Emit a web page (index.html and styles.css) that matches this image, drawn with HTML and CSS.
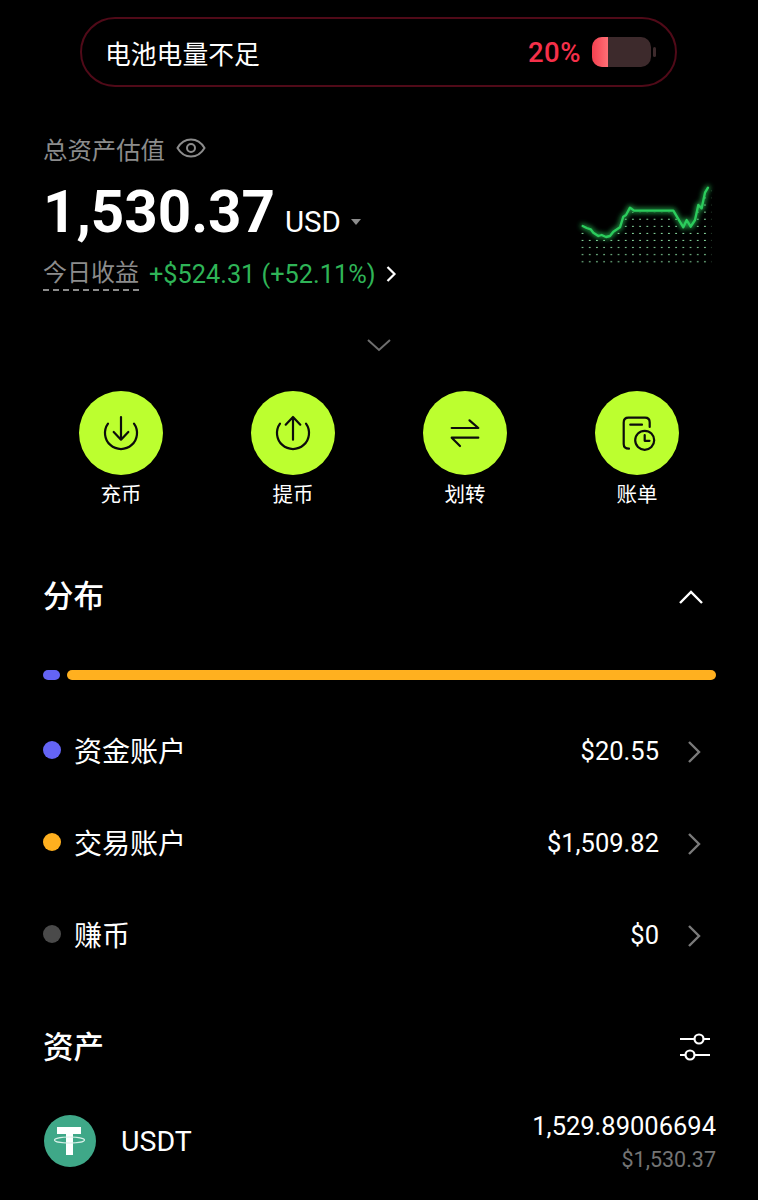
FILE: index.html
```html
<!DOCTYPE html>
<html lang="zh-CN">
<head>
    <meta charset="UTF-8">
    <meta name="viewport" content="width=device-width, initial-scale=1.0">
    <title>资产</title>
    <link rel="stylesheet" href="styles.css">
</head>
<body>
    <div class="page">

        <!-- Battery warning -->
        <div class="battery-banner">
            <span class="battery-text">电池电量不足</span>
            <span class="battery-percent">20%</span>
            <span class="battery-icon"><span class="battery-level"></span></span>
            <span class="battery-cap"></span>
        </div>

        <!-- Total assets -->
        <section class="summary">
            <div class="summary-info">
                <div class="total-label">
                    <span>总资产估值</span>
                    <svg class="eye-icon" viewBox="0 0 30 24" fill="none" stroke="#8c8c8c" stroke-width="2">
                        <path d="M1.500 12C5 6 9.500 3.500 15 3.500S25 6 28.500 12C25 18 20.500 20.500 15 20.500S5 18 1.500 12Z"/>
                        <circle cx="15" cy="12" r="4"/>
                    </svg>
                </div>
                <div class="total-value">
                    <span class="amount">1,530.37</span>
                    <span class="currency">USD</span>
                    <span class="caret"></span>
                </div>
                <div class="today">
                    <span class="today-label">今日收益</span>
                    <span class="today-gain">+$524.31 (+52.11%)</span>
                    <svg class="today-arrow" viewBox="0 0 12 18" fill="none" stroke="#fff" stroke-width="2.200">
                        <path d="M2.500 2L9.500 9L2.500 16"/>
                    </svg>
                </div>
            </div>
            <svg class="sparkline" viewBox="0 0 450 300">
                <defs>
                    <pattern id="dots" x="16" y="0" width="21.600" height="21.300" patternUnits="userSpaceOnUse">
                        <circle cx="21.600" cy="21" r="3" fill="#8fe6a8"/>
                        <circle cx="0" cy="21" r="3" fill="#8fe6a8"/>
                    </pattern>
                    <filter id="glow" x="-10%" y="-30%" width="120%" height="160%">
                        <feGaussianBlur stdDeviation="8"/>
                    </filter>
                </defs>
                <polygon fill="url(#dots)" points="30,180 85,205 108,208 130,192 150,178 160,146 180,120 192,128 310,128 340,178 350,156 362,176 375,156 385,110 395,120 405,72 424,58 424,290 30,290"/>
                <polyline class="spark-glow" filter="url(#glow)" points="38,168 50,174 62,178 70,188 85,198 95,195 108,201 120,198 130,185 150,172 160,140 168,135 180,113 192,122 310,122 340,172 350,150 362,170 375,150 385,105 395,115 405,68 414,53"/>
                <polyline class="spark-line" points="38,168 50,174 62,178 70,188 85,198 95,195 108,201 120,198 130,185 150,172 160,140 168,135 180,113 192,122 310,122 340,172 350,150 362,170 375,150 385,105 395,115 405,68 414,53"/>
            </svg>
        </section>

        <div class="expand">
            <svg class="expand-icon" viewBox="0 0 26 14" fill="none" stroke="#6e6e6e" stroke-width="2">
                <path d="M2 2L13 12L24 2"/>
            </svg>
        </div>

        <!-- Actions -->
        <nav class="actions">
            <div class="action">
                <span class="action-circle">
                    <svg viewBox="0 0 40 40" fill="none" stroke="#0c0c0c" stroke-width="2.200" stroke-linecap="round" stroke-linejoin="round">
                        <path d="M7 10.700A16 16 0 1 0 33 10.700"/>
                        <path d="M20 4V26.700M12.700 19L20 26.700L27.300 19"/>
                    </svg>
                </span>
                <span class="action-label">充币</span>
            </div>
            <div class="action">
                <span class="action-circle">
                    <svg viewBox="0 0 40 40" fill="none" stroke="#0c0c0c" stroke-width="2.200" stroke-linecap="round" stroke-linejoin="round">
                        <path d="M7 10.700A16 16 0 1 0 33 10.700"/>
                        <path d="M20 26.700V4M12.700 11.700L20 4L27.300 11.700"/>
                    </svg>
                </span>
                <span class="action-label">提币</span>
            </div>
            <div class="action">
                <span class="action-circle">
                    <svg viewBox="0 0 40 40" fill="none" stroke="#0c0c0c" stroke-width="2.200" stroke-linecap="round" stroke-linejoin="round">
                        <path d="M6.700 15H33.300L24.500 7.300"/>
                        <path d="M33.300 24.700H6.700L15 33"/>
                    </svg>
                </span>
                <span class="action-label">划转</span>
            </div>
            <div class="action">
                <span class="action-circle">
                    <svg viewBox="0 0 40 40" fill="none" stroke="#0c0c0c" stroke-width="2.200" stroke-linecap="round" stroke-linejoin="round">
                        <path d="M12 35.700C8.500 35.700 6.700 34 6.700 31V9.500C6.700 6.500 8.500 4.700 11.500 4.700H28C31 4.700 32.700 6.500 32.700 9.500V14"/>
                        <path d="M13.300 11.700H25"/>
                        <circle cx="27.700" cy="27.300" r="9.500"/>
                        <path d="M27.700 22V27.800H32.500"/>
                    </svg>
                </span>
                <span class="action-label">账单</span>
            </div>
        </nav>

        <!-- Distribution -->
        <section class="distribution">
            <div class="section-head">
                <h2>分布</h2>
                <svg class="collapse-icon" viewBox="0 0 26 16" fill="none" stroke="#fff" stroke-width="2.400">
                    <path d="M2 14L13 3L24 14"/>
                </svg>
            </div>
            <div class="dist-bar">
                <span class="bar-funding"></span>
                <span class="bar-trading"></span>
            </div>
            <div class="account-row">
                <span class="dot dot-funding"></span>
                <span class="account-name">资金账户</span>
                <span class="account-value">$20.55</span>
                <svg class="row-arrow" viewBox="0 0 14 24" fill="none" stroke="#7a7a7a" stroke-width="2.400">
                    <path d="M2 2L12 12L2 22"/>
                </svg>
            </div>
            <div class="account-row">
                <span class="dot dot-trading"></span>
                <span class="account-name">交易账户</span>
                <span class="account-value">$1,509.82</span>
                <svg class="row-arrow" viewBox="0 0 14 24" fill="none" stroke="#7a7a7a" stroke-width="2.400">
                    <path d="M2 2L12 12L2 22"/>
                </svg>
            </div>
            <div class="account-row">
                <span class="dot dot-earn"></span>
                <span class="account-name">赚币</span>
                <span class="account-value">$0</span>
                <svg class="row-arrow" viewBox="0 0 14 24" fill="none" stroke="#7a7a7a" stroke-width="2.400">
                    <path d="M2 2L12 12L2 22"/>
                </svg>
            </div>
        </section>

        <!-- Assets -->
        <section class="assets">
            <div class="section-head">
                <h2>资产</h2>
                <svg class="filter-icon" viewBox="0 0 32 28" fill="none" stroke="#fff" stroke-width="2.200">
                    <path d="M1 6H15.500M24.500 6H31"/>
                    <circle cx="20" cy="6" r="4.500"/>
                    <path d="M1 22H6.500M15.500 22H31"/>
                    <circle cx="11" cy="22" r="4.500"/>
                </svg>
            </div>
            <div class="coin-row">
                <svg class="coin-icon" viewBox="0 0 52 52">
                    <circle cx="26" cy="26" r="26" fill="#3fa888"/>
                    <path d="M13 12H37V19H29V40H22V19H13Z" fill="#fff"/>
                    <ellipse cx="25.500" cy="25" rx="15" ry="3" fill="none" stroke="#d8f0e8" stroke-width="1.200"/>
                </svg>
                <span class="coin-name">USDT</span>
                <div class="coin-amounts">
                    <span class="coin-qty">1,529.89006694</span>
                    <span class="coin-usd">$1,530.37</span>
                </div>
            </div>
        </section>
    </div>
</body>
</html>
```

FILE: styles.css
```css
* {
    box-sizing: border-box;
}

html, body {
    margin: 0;
    padding: 0;
    background-color: #000;
}

body {
    font-family: Roboto, 'Noto Sans CJK SC', sans-serif;
    color: #fff;
}

.page {
    width: 758px;
    height: 1200px;
    overflow: hidden;
    background-color: #000;
    padding-top: 17px;
}

/* Battery banner */
.battery-banner {
    display: flex;
    align-items: center;
    width: 597px;
    height: 70px;
    margin-left: 80px;
    padding: 0 19px 0 23px;
    border: 2px solid #500a18;
    border-radius: 35px;
}

.battery-text {
    flex: 1;
    font-size: 25.800px;
}

.battery-percent {
    font-size: 27.500px;
    font-weight: 500;
    letter-spacing: 0.500px;
    color: #f5304a;
    margin-right: 11px;
}

.battery-icon {
    display: block;
    width: 59px;
    height: 30px;
    border-radius: 10px;
    background-color: #3d2a2c;
    overflow: hidden;
}

.battery-level {
    display: block;
    width: 16px;
    height: 100%;
    background: linear-gradient(90deg, #f4404f, #ff6f76);
}

.battery-cap {
    display: block;
    width: 3px;
    height: 10px;
    margin-left: 2px;
    border-radius: 2px;
    background-color: #3d2a2c;
}

/* Summary */
.summary {
    display: flex;
    justify-content: space-between;
    padding: 44px 38px 0 43px;
}

.total-label {
    display: flex;
    align-items: center;
    gap: 11px;
    height: 34px;
    font-size: 24.400px;
    color: #8c8c8c;
}

.eye-icon {
    width: 30px;
    height: 24px;
}

.total-value {
    display: flex;
    align-items: baseline;
    height: 60px;
    margin-top: 17px;
}

.amount {
    font-size: 58.300px;
    font-weight: 700;
    line-height: 60px;
}

.currency {
    font-size: 29.500px;
    margin-left: 10px;
}

.caret {
    width: 0;
    height: 0;
    margin: 19px 0 0 10px;
    border-left: 5.500px solid transparent;
    border-right: 5.500px solid transparent;
    border-top: 6px solid #8c8c8c;
    align-self: center;
}

.today {
    display: flex;
    align-items: center;
    height: 36px;
    margin-top: 14px;
    font-size: 24px;
}

.today-label {
    color: #8c8c8c;
    border-bottom: 2px dashed #8c8c8c;
    line-height: 31px;
    margin-right: 10px;
}

.today-gain {
    font-size: 25.300px;
    color: #2fb457;
}

.today-arrow {
    width: 12px;
    height: 18px;
    margin-left: 9px;
}

.sparkline {
    width: 150px;
    height: 100px;
    margin-top: 39px;
    flex-shrink: 0;
}

.spark-line, .spark-glow {
    fill: none;
    stroke: #2bcc5c;
    stroke-width: 7;
    stroke-linejoin: round;
    stroke-linecap: round;
}

.spark-glow {
    stroke-width: 14;
    opacity: 0.75;
}

.expand {
    display: flex;
    justify-content: center;
    height: 14px;
    margin-top: 46px;
}

.expand-icon {
    width: 26px;
    height: 14px;
}

/* Actions */
.actions {
    display: grid;
    grid-template-columns: repeat(4, 172px);
    padding-left: 35px;
    margin-top: 39px;
}

.action {
    display: flex;
    flex-direction: column;
    align-items: center;
}

.action-circle {
    display: flex;
    align-items: center;
    justify-content: center;
    width: 84px;
    height: 84px;
    border-radius: 50%;
    background-color: #bcff2f;
}

.action-circle svg {
    width: 40px;
    height: 40px;
}

.action-label {
    font-size: 20.500px;
    line-height: 28px;
    margin-top: 6px;
}

/* Sections */
.section-head {
    display: flex;
    align-items: center;
    justify-content: space-between;
    height: 44px;
}

.section-head h2 {
    margin: 0;
    font-size: 30.500px;
    font-weight: 500;
}

.distribution {
    padding: 0 42px 0 43px;
    margin-top: 63px;
}

.collapse-icon {
    width: 26px;
    height: 16px;
    margin: 6px 12px 0 0;
}

.dist-bar {
    display: flex;
    gap: 7px;
    height: 10px;
    margin-top: 54px;
}

.dist-bar span {
    border-radius: 5px;
}

.bar-funding {
    width: 17px;
    background-color: #6464f5;
}

.bar-trading {
    flex: 1;
    background-color: #ffb01f;
}

.account-row {
    display: flex;
    align-items: center;
    height: 92px;
    padding-right: 15px;
}

.dist-bar + .account-row {
    margin-top: 24px;
}

.dot {
    width: 18px;
    height: 18px;
    border-radius: 50%;
}

.dot-funding {
    background-color: #6464f5;
}

.dot-trading {
    background-color: #ffb01f;
}

.dot-earn {
    background-color: #4a4a4a;
}

.account-name {
    flex: 1;
    font-size: 28px;
    margin-left: 13px;
}

.account-value {
    font-size: 25.500px;
    margin: 2px 28px 0 0;
}

.row-arrow {
    width: 14px;
    height: 24px;
    margin-top: 4px;
}

.assets {
    padding: 0 42px 0 43px;
    margin-top: 43px;
}

.filter-icon {
    width: 32px;
    height: 28px;
    margin: 4px 5px 0 0;
}

.coin-row {
    display: flex;
    align-items: center;
    margin-top: 38px;
}

.coin-icon {
    width: 52px;
    height: 52px;
    margin-left: 1px;
}

.coin-name {
    flex: 1;
    font-size: 28.500px;
    margin-left: 25px;
}

.coin-amounts {
    display: flex;
    flex-direction: column;
    align-items: flex-end;
    padding-top: 4px;
}

.coin-qty {
    font-size: 25.500px;
    line-height: 34px;
}

.coin-usd {
    font-size: 21.500px;
    line-height: 34px;
    color: #747474;
}
```
